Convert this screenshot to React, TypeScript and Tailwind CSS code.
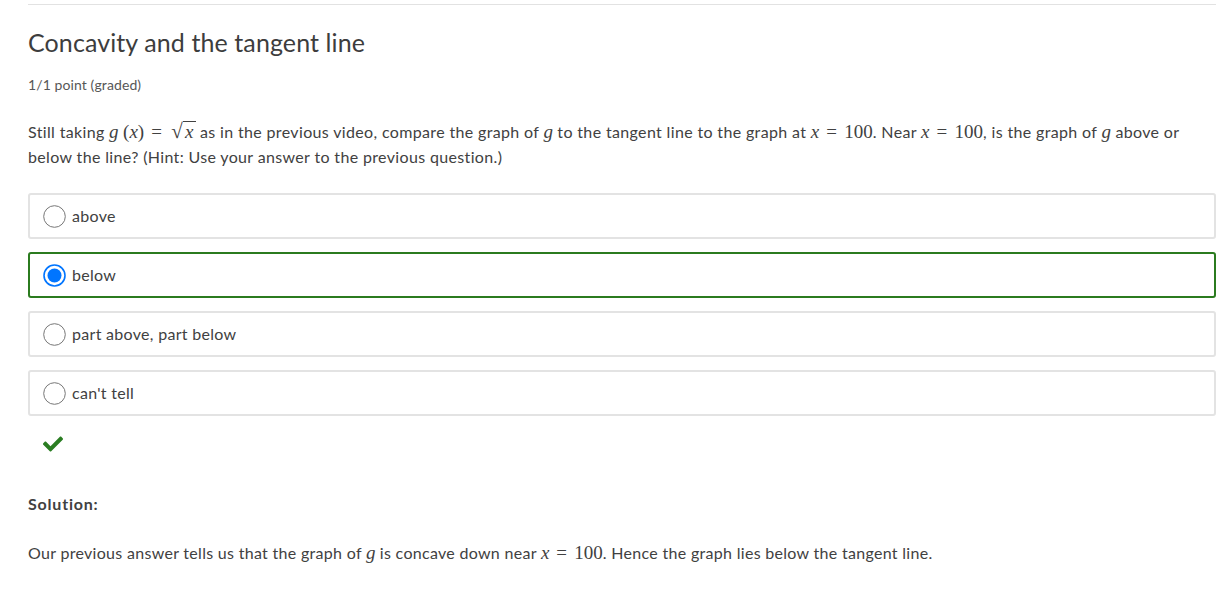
import React from 'react';
import { FaCheck } from 'react-icons/fa';

const M: React.FC<{ children: React.ReactNode }> = ({ children }) => (
  <span className="font-['Liberation_Serif',serif] italic text-[19px] leading-none tracking-normal">{children}</span>
);

const N: React.FC<{ children: React.ReactNode }> = ({ children }) => (
  <span className="font-['Liberation_Serif',serif] text-[19px] leading-none tracking-normal">{children}</span>
);

const Eq = () => (
  <span className="font-['Liberation_Serif',serif] text-[19px] leading-none mx-[7px]">=</span>
);

const Radio: React.FC<{ checked?: boolean }> = ({ checked }) =>
  checked ? (
    <svg width="23" height="23" viewBox="0 0 23 23" className="shrink-0">
      <circle cx="11.5" cy="11.5" r="10.5" fill="#fff" stroke="#0075ff" strokeWidth="1.6" />
      <circle cx="11.5" cy="11.5" r="7" fill="#0075ff" />
    </svg>
  ) : (
    <svg width="23" height="23" viewBox="0 0 23 23" className="shrink-0">
      <circle cx="11.5" cy="11.5" r="10.8" fill="#fff" stroke="#767676" strokeWidth="1" />
    </svg>
  );

const options = [
  { label: 'above' },
  { label: 'below', checked: true },
  { label: 'part above, part below' },
  { label: "can't tell" },
];

export default function App() {
  return (
    <div className="w-[1226px] h-[589px] overflow-hidden bg-white text-[#414141] font-['Lato',sans-serif]">
      <div className="ml-[28px] mr-[10px] mt-[4px] border-t border-[#e2e2e2]">
        <h3 className="mt-[20px] text-[25px] leading-[34px] tracking-[0.1px] text-[#3d3d3d]">
          Concavity and the tangent line
        </h3>
        <div className="mt-[16px] text-[14px] leading-[20px] tracking-[0.1px] text-[#575757]">1/1 point (graded)</div>

        <p className="mt-[24px] text-[16px] leading-[25px] tracking-[0.35px]">
          Still taking <M>g</M> <N>(</N>
          <M>x</M>
          <N>)</N>
          <Eq />
          <span className="font-['Liberation_Serif',serif] text-[21px] leading-none ml-[2px]">√</span>
          <span className="border-t border-[#414141] inline-block leading-[18px] px-[2px]">
            <M>x</M>
          </span>{' '}
          as in the previous video, compare the graph of <M>g</M> to the tangent line to the graph at <M>x</M>
          <Eq />
          <N>100</N>. Near <M>x</M>
          <Eq />
          <N>100</N>, is the graph of <M>g</M> above or
          <br />
          below the line? (Hint: Use your answer to the previous question.)
        </p>

        <div className="mt-[24px] flex flex-col gap-[13px]">
          {options.map((o) => (
            <div
              key={o.label}
              className={`h-[46px] rounded-[3px] border-2 flex items-center pl-[13px] gap-[6px] ${
                o.checked ? 'border-[#2b7b1f]' : 'border-[#e3e3e3]'
              }`}
            >
              <Radio checked={o.checked} />
              <span className="text-[16px] tracking-[0.3px] -mt-[1px]">{o.label}</span>
            </div>
          ))}
        </div>

        <div className="mt-[20px] ml-[15px] h-[16px] flex items-center">
          <FaCheck size={20} color="#2a7d22" />
        </div>

        <div className="mt-[39px] text-[16px] leading-[25px] font-bold tracking-[0.8px]">Solution:</div>

        <p className="mt-[24px] text-[16px] leading-[25px] tracking-[0.3px]">
          Our previous answer tells us that the graph of <M>g</M> is concave down near <M>x</M>
          <Eq />
          <N>100</N>. Hence the graph lies below the tangent line.
        </p>
      </div>
    </div>
  );
}
